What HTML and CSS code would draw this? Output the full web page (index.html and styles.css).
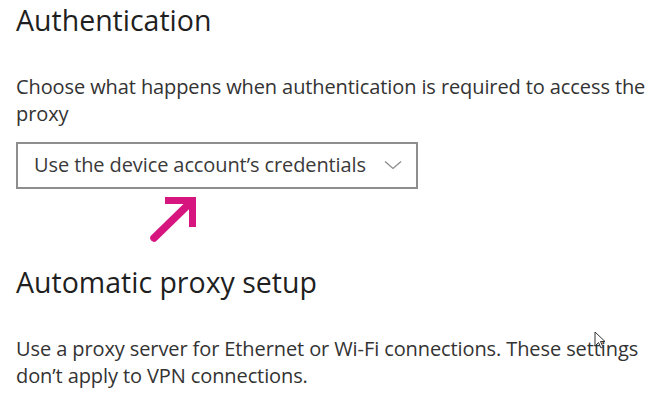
FILE: index.html
```html
<!DOCTYPE html>
<html lang="en">
<head>
<meta charset="utf-8">
<title>Proxy settings</title>
<link rel="stylesheet" href="styles.css">
</head>
<body>
<main class="page">
  <section class="section">
    <h2 class="heading">Authentication</h2>
    <p class="desc">Choose what happens when authentication is required to access the proxy</p>
    <div class="select">
      <span class="select-label">Use the device account’s credentials</span>
      <svg class="chevron" width="18" height="10" viewBox="0 0 18 10" aria-hidden="true">
        <path d="M1 1.5 L9 8.5 L17 1.5" fill="none" stroke="#8c8c8c" stroke-width="1.3"/>
      </svg>
    </div>
    <svg class="annotation" width="64" height="56" viewBox="0 0 64 56" aria-hidden="true">
      <path d="M18 45 L55 9" stroke="#d6157f" stroke-width="7.5" stroke-linecap="round" fill="none"/>
      <path d="M29 7.5 L56.5 7.5 L56.5 34" stroke="#d6157f" stroke-width="7" fill="none"/>
    </svg>
  </section>
  <section class="section">
    <h2 class="heading">Automatic proxy setup</h2>
    <p class="desc">Use a proxy server for Ethernet or Wi-Fi connections. These settings don’t apply to VPN connections.</p>
  </section>
  <svg class="cursor" width="14" height="20" viewBox="0 0 14 20" aria-hidden="true">
    <path d="M1 1 L1 15 L4.5 11.5 L7 17 L9 16 L6.5 10.5 L11 10.5 Z" fill="#ffffff" stroke="#333" stroke-width="1"/>
  </svg>
</main>
</body>
</html>
```
FILE: styles.css
```css
html, body {
  margin: 0;
  padding: 0;
  background: #ffffff;
}
body {
  font-family: "Open Sans", "Noto Sans", sans-serif;
  color: #2e2e2e;
}
.page {
  position: relative;
  padding: 0 16px;
  width: 671px;
  height: 420px;
  box-sizing: border-box;
  overflow: hidden;
}
.heading {
  margin: 0;
  font-weight: 400;
  font-size: 28.5px;
  line-height: 38px;
  color: #1f1f1f;
}
.section:first-child .heading {
  padding-top: 1px;
}
.desc {
  margin: 0;
  font-size: 20px;
  line-height: 27px;
  color: #333333;
  letter-spacing: -0.1px;
}
.section:first-child .desc {
  margin-top: 34px;
}
.select {
  margin-top: 15px;
  width: 402px;
  height: 47px;
  box-sizing: border-box;
  border: 2px solid #8e8e8e;
  display: flex;
  align-items: center;
  justify-content: space-between;
  padding: 0 14px 3px 16px;
}
.select-label {
  font-size: 20px;
  color: #3a3a3a;
  letter-spacing: -0.1px;
}
.chevron {
  display: block;
  margin-top: 1px;
}
.annotation {
  display: block;
  margin: 4px 0 0 120px;
}
.section + .section .heading {
  margin-top: 14px;
}
.section + .section .desc {
  margin-top: 34px;
}
.cursor {
  position: absolute;
  left: 594px;
  top: 331px;
}
```
